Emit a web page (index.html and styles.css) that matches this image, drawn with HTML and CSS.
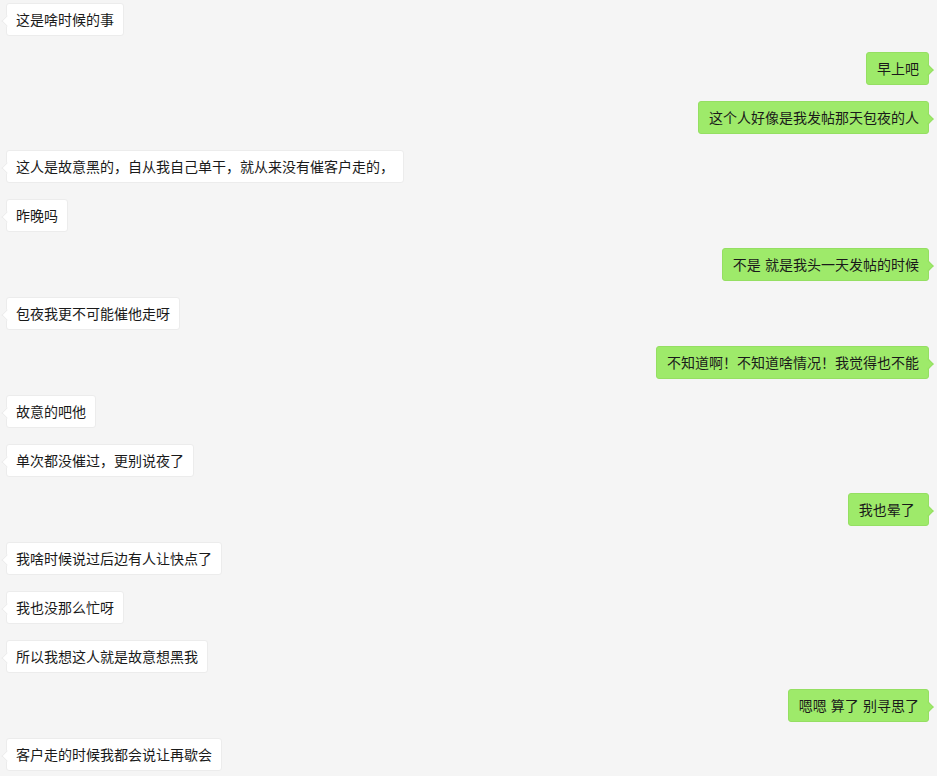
FILE: index.html
```html
<!DOCTYPE html>
<html lang="zh-CN">
<head>
<meta charset="utf-8">
<title>聊天记录</title>
<link rel="stylesheet" href="styles.css">
</head>
<body>
<div class="chat">
  <div class="row left"><div class="bubble">这是啥时候的事</div></div>
  <div class="row right"><div class="bubble">早上吧</div></div>
  <div class="row right"><div class="bubble">这个人好像是我发帖那天包夜的人</div></div>
  <div class="row left"><div class="bubble">这人是故意黑的，自从我自己单干，就从来没有催客户走的，</div></div>
  <div class="row left"><div class="bubble">昨晚吗</div></div>
  <div class="row right"><div class="bubble">不是 就是我头一天发帖的时候</div></div>
  <div class="row left"><div class="bubble">包夜我更不可能催他走呀</div></div>
  <div class="row right"><div class="bubble">不知道啊！不知道啥情况！我觉得也不能</div></div>
  <div class="row left"><div class="bubble">故意的吧他</div></div>
  <div class="row left"><div class="bubble">单次都没催过，更别说夜了</div></div>
  <div class="row right"><div class="bubble">我也晕了&nbsp;</div></div>
  <div class="row left"><div class="bubble">我啥时候说过后边有人让快点了</div></div>
  <div class="row left"><div class="bubble">我也没那么忙呀</div></div>
  <div class="row left"><div class="bubble">所以我想这人就是故意想黑我</div></div>
  <div class="row right"><div class="bubble">嗯嗯 算了 别寻思了</div></div>
  <div class="row left"><div class="bubble">客户走的时候我都会说让再歇会</div></div>
</div>
</body>
</html>
```

FILE: styles.css
```css
html, body {
  margin: 0;
  padding: 0;
  background: #f5f5f5;
  overflow: hidden;
}

body {
  font-family: "Noto Sans CJK SC", "Liberation Sans", sans-serif;
  font-size: 14px;
  color: #1a1a1a;
}

.chat {
  display: flex;
  flex-direction: column;
  gap: 16px;
  padding: 3px 8px 0 6px;
}

.row {
  display: flex;
}

.row.left {
  justify-content: flex-start;
}

.row.right {
  justify-content: flex-end;
}

.bubble {
  position: relative;
  padding: 6px 9px;
  line-height: 19px;
  border-radius: 3px;
  white-space: nowrap;
}

.left .bubble {
  background: #ffffff;
  border: 1px solid #ececec;
}

.right .bubble {
  background: #9eea6a;
  border: 1px solid #95df62;
  padding-left: 10px;
  word-spacing: 1px;
}

.bubble::before {
  content: "";
  position: absolute;
  top: 13px;
  width: 7px;
  height: 7px;
  transform: rotate(45deg);
}

.left .bubble::before {
  left: -4px;
  background: #ffffff;
  border-left: 1px solid #ececec;
  border-bottom: 1px solid #ececec;
}

.right .bubble::before {
  right: -4px;
  background: #9eea6a;
  border-right: 1px solid #95df62;
  border-top: 1px solid #95df62;
}
```
